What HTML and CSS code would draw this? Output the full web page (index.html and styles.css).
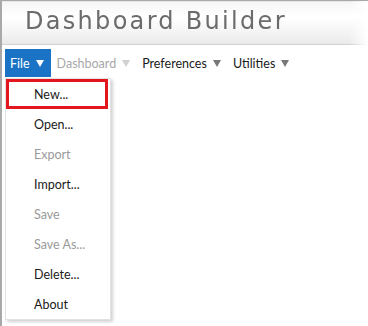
FILE: index.html
```html
<!DOCTYPE html>
<html lang="en">
<head>
    <meta charset="UTF-8">
    <title>Dashboard Builder</title>
    <link rel="stylesheet" href="styles.css">
</head>
<body>
    <div class="app">
        <div class="header">
            <h1 class="title">Dashboard Builder</h1>
        </div>
        <div class="menubar">
            <div class="menu active">File<span class="arrow"></span></div>
            <div class="menu disabled">Dashboard<span class="arrow"></span></div>
            <div class="menu">Preferences<span class="arrow"></span></div>
            <div class="menu">Utilities<span class="arrow"></span></div>
        </div>
        <div class="dropdown">
            <div class="item selected">New...</div>
            <div class="item">Open...</div>
            <div class="item disabled">Export</div>
            <div class="item">Import...</div>
            <div class="item disabled">Save</div>
            <div class="item disabled">Save As...</div>
            <div class="item">Delete...</div>
            <div class="item">About</div>
        </div>
    </div>
</body>
</html>
```

FILE: styles.css
```css
html, body {
    margin: 0;
    padding: 0;
    background: #fff;
}
body {
    font-family: Lato, "Noto Sans", sans-serif;
    color: #222;
}
.app {
    width: 366px;
    height: 325px;
    border-left: 2px solid #a9a9a9;
    border-top: 1px solid #a9a9a9;
    position: relative;
}
.header {
    height: 42px;
    border-top: 1px solid #e6e6e6;
    border-bottom: 1px solid #d2d2d2;
    background: linear-gradient(to bottom, #f6f6f6 0%, #ffffff 35%, #f2f2f2 80%, #e9e9e9 100%);
    -webkit-mask-image: linear-gradient(to right, #000 95%, transparent 100%);
    mask-image: linear-gradient(to right, #000 95%, transparent 100%);
}
.title {
    margin: 0;
    padding: 4px 0 0 23px;
    font-family: "DejaVu Sans", sans-serif;
    font-weight: normal;
    font-size: 24px;
    letter-spacing: 2.3px;
    color: #6b6b6b;
    line-height: 30px;
}
.menubar {
    display: flex;
    align-items: center;
    margin-top: 4px;
    padding-left: 3px;
    height: 28px;
    font-size: 12.5px;
}
.menu {
    display: flex;
    align-items: center;
    height: 28px;
    padding: 0 6px;
    color: #1a1a1a;
}
.menu.active {
    padding: 0 7px 0 5px;
}
.menu .arrow {
    display: inline-block;
    width: 0;
    height: 0;
    margin-left: 6px;
    border-left: 4.5px solid transparent;
    border-right: 4.5px solid transparent;
    border-top: 7px solid #777;
}
.menu.active {
    background: #1b73c6;
    color: #fff;
}
.menu.active .arrow {
    border-top-color: #fff;
}
.menu.disabled {
    color: #a8a8a8;
}
.menu.disabled .arrow {
    border-top-color: #d0d0d0;
}
.dropdown {
    position: absolute;
    left: 3px;
    top: 77px;
    width: 104px;
    background: #fff;
    border: 1px solid #e2e2e2;
    box-shadow: 2px 2px 3px rgba(0, 0, 0, 0.18);
    font-size: 12.5px;
}
.item {
    height: 30px;
    line-height: 31px;
    padding-left: 28px;
    color: #1a1a1a;
    box-sizing: border-box;
}
.item.disabled {
    color: #9a9a9a;
}
.item.selected {
    border: 3px solid #e3161e;
    line-height: 25px;
    padding-left: 25px;
    margin-right: 2px;
}
```
